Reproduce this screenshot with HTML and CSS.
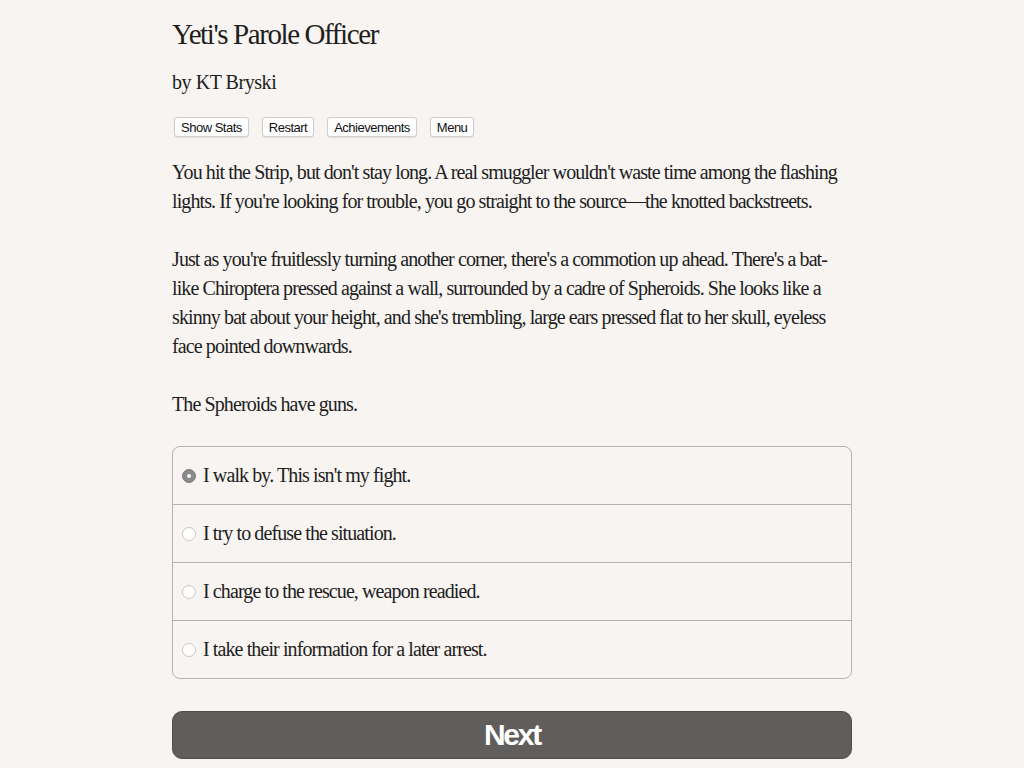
FILE: index.html
```html
<!DOCTYPE html>
<html>
<head>
<meta charset="utf-8">
<link rel="stylesheet" href="styles.css">
</head>
<body>
<div class="container">
  <h1 class="title">Yeti's Parole Officer</h1>
  <h2 class="author">by KT Bryski</h2>
  <div class="buttons">
    <button class="btn">Show Stats</button>
    <button class="btn">Restart</button>
    <button class="btn">Achievements</button>
    <button class="btn">Menu</button>
  </div>
  <div class="text">
    <p>You hit the Strip, but don't stay long. A real smuggler wouldn't waste time among the flashing lights. If you're looking for trouble, you go straight to the source—the knotted backstreets.</p>
    <p>Just as you're fruitlessly turning another corner, there's a commotion up ahead. There's a bat-like Chiroptera pressed against a wall, surrounded by a cadre of Spheroids. She looks like a skinny bat about your height, and she's trembling, large ears pressed flat to her skull, eyeless face pointed downwards.</p>
    <p>The Spheroids have guns.</p>
  </div>
  <div class="choices">
    <label class="choice"><span class="radio checked"></span><span>I walk by. This isn't my fight.</span></label>
    <label class="choice"><span class="radio"></span><span>I try to defuse the situation.</span></label>
    <label class="choice"><span class="radio"></span><span>I charge to the rescue, weapon readied.</span></label>
    <label class="choice"><span class="radio"></span><span>I take their information for a later arrest.</span></label>
  </div>
  <button class="next">Next</button>
</div>
</body>
</html>
```
FILE: styles.css
```css
html, body {
  margin: 0;
  padding: 0;
  background: #f7f4f1;
}
body {
  font-family: "Liberation Serif", serif;
  color: #1e1e1e;
}
.container {
  width: 680px;
  margin: 0 auto;
  padding-top: 16px;
}
.title {
  font-size: 29px;
  letter-spacing: -1.4px;
  font-weight: normal;
  margin: 0;
  line-height: 36px;
}
.author {
  font-size: 20px;
  letter-spacing: -0.45px;
  font-weight: normal;
  margin: 16px 0 0 0;
  line-height: 28px;
}
.buttons {
  display: flex;
  gap: 13px;
  margin-top: 21px;
  padding-left: 2px;
}
.btn {
  font-family: "Liberation Sans", sans-serif;
  font-size: 13px;
  letter-spacing: -0.5px;
  background: #fff;
  border: 1px solid #cfcfcf;
  border-radius: 3px;
  height: 20px;
  padding: 0 6px;
  color: #111;
  box-shadow: 0 1px 1px rgba(0,0,0,0.08);
}
.text {
  margin-top: 21px;
  font-size: 20px;
  letter-spacing: -0.9px;
  line-height: 29px;
}
.text p {
  margin: 0 0 29px 0;
}
.text p:last-child {
  margin-bottom: 0;
}
.choices {
  border: 1px solid #b4b4b4;
  border-radius: 8px;
  margin-top: 27px;
}
.choice {
  display: flex;
  align-items: center;
  height: 57px;
  padding-left: 9px;
  font-size: 20px;
  letter-spacing: -0.9px;
  border-top: 1px solid #b4b4b4;
}
.choice:first-child {
  border-top: none;
}
.radio {
  flex: none;
  width: 14px;
  height: 14px;
  border-radius: 50%;
  background: #fff;
  border: 1px solid #c9c9c9;
  box-sizing: border-box;
  margin-right: 7px;
  position: relative;
}
.radio.checked {
  background: #8b8a8b;
  border-color: #7d7c7d;
}
.radio.checked::after {
  content: "";
  position: absolute;
  left: 4px;
  top: 4px;
  width: 4px;
  height: 4px;
  border-radius: 50%;
  background: #fff;
}
.next {
  display: block;
  width: 680px;
  height: 48px;
  margin-top: 32px;
  background: #5f5e5d;
  border: 1px solid #4f4e4d;
  border-radius: 10px;
  color: #fff;
  font-family: "Liberation Sans", sans-serif;
  font-weight: bold;
  font-size: 30px;
  letter-spacing: -2.2px;
}
```
